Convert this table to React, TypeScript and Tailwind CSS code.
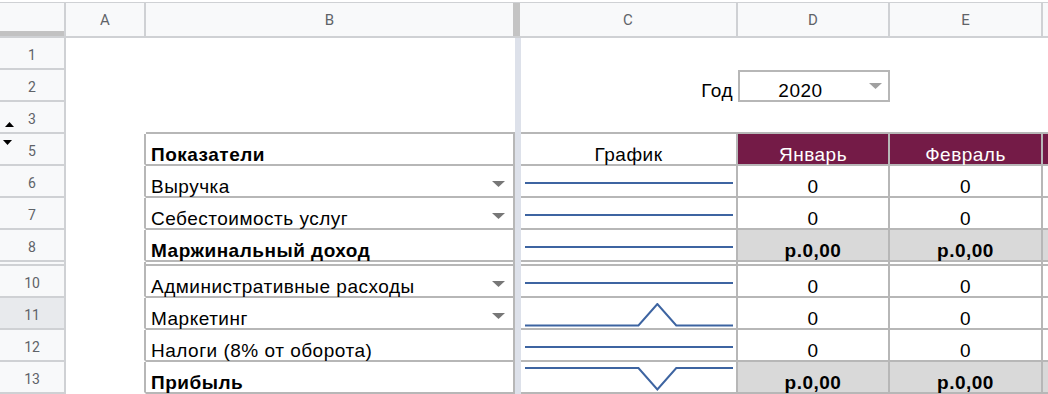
import React from "react";

const FONT = "[font-family:'Liberation_Sans',Arial,sans-serif]";
const HFONT = "[font-family:Roboto,Arial,sans-serif]";

function Tri({ color, w = 13, h = 6 }: { color: string; w?: number; h?: number }) {
  return (
    <svg width={w} height={h} viewBox={`0 0 ${w} ${h}`} className="block">
      <polygon points={`0,0 ${w},0 ${w / 2},${h}`} fill={color} />
    </svg>
  );
}

function Spark({ data }: { data: number[] }) {
  const W = 208;
  const H = 24;
  const min = Math.min(...data);
  const max = Math.max(...data);
  const pts = data
    .map((v, i) => {
      const x = (i * W) / (data.length - 1);
      const y = max === min ? 12 : 1 + (1 - (v - min) / (max - min)) * 21.5;
      return `${x.toFixed(2)},${y.toFixed(2)}`;
    })
    .join(" ");
  return (
    <svg width={W} height={H} className="block">
      <polyline points={pts} fill="none" stroke="#3d64a1" strokeWidth="2" />
    </svg>
  );
}

const flat = [0, 0, 0, 0, 0, 0, 0, 0, 0, 0, 0, 0];
const up = [0, 0, 0, 0, 0, 0, 0, 1, 0, 0, 0, 0];
const down = [0, 0, 0, 0, 0, 0, 0, -1, 0, 0, 0, 0];

function RowHead({ n, bg = "bg-[#f8f9fa]", children }: { n: string; bg?: string; children?: React.ReactNode }) {
  return (
    <div
      className={`relative flex h-full w-[66px] shrink-0 items-center justify-center border-r-2 border-b-2 border-[#cfd1d4] pt-[5px] text-[14px] tracking-normal text-[#5f6368] ${HFONT} ${bg}`}
    >
      {n}
      {children}
    </div>
  );
}

type TableRowProps = {
  n: string;
  headBg?: string;
  marker?: React.ReactNode;
  label: string;
  bold?: boolean;
  dropdown?: boolean;
  spark: number[];
  gray?: boolean;
};

function TableRow({ n, headBg, marker, label, bold, dropdown, spark, gray }: TableRowProps) {
  const valCls = gray ? "bg-[#d9d9d9] font-bold" : "";
  return (
    <div className="flex h-[32px]">
      <RowHead n={n} bg={headBg}>
        {marker}
      </RowHead>
      <div className="h-full w-[80px] shrink-0 border-r-2 border-b-2 border-r-[#b7b7b7] border-b-transparent" />
      <div className="flex h-full w-[369px] shrink-0 items-end border-r-2 border-b-2 border-[#b7b7b7] pl-[5px]">
        <span className={`flex-1 leading-[18px] ${bold ? "font-bold" : ""}`}>{label}</span>
        {dropdown && (
          <span className="mt-[5px] mr-[8px] self-center">
            <Tri color="#777777" />
          </span>
        )}
      </div>
      <div className="h-full w-[6px] shrink-0 bg-[#dde1ea]" />
      <div className="h-full w-[217px] shrink-0 border-r-2 border-b-2 border-[#b7b7b7] pt-[5px] pl-[4px]">
        <Spark data={spark} />
      </div>
      <div className={`flex h-full w-[152px] shrink-0 items-end justify-center border-r-2 border-b-2 border-[#b7b7b7] leading-[18px] ${valCls}`}>
        {gray ? "р.0,00" : "0"}
      </div>
      <div className={`flex h-full w-[153px] shrink-0 items-end justify-center border-r-2 border-b-2 border-[#b7b7b7] leading-[18px] ${valCls}`}>
        {gray ? "р.0,00" : "0"}
      </div>
      <div className={`h-full flex-1 border-b-2 border-[#b7b7b7] ${gray ? "bg-[#d9d9d9]" : ""}`} />
    </div>
  );
}

function BlankRow({ n, tableTop, marker, children }: { n: string; tableTop?: boolean; marker?: React.ReactNode; children?: React.ReactNode }) {
  const bb = tableTop ? "border-b-[#b7b7b7]" : "border-b-transparent";
  return (
    <div className="flex h-[32px]">
      <RowHead n={n}>{marker}</RowHead>
      <div className="h-full w-[80px] shrink-0 border-b-2 border-b-transparent" />
      <div className={`h-full w-[369px] shrink-0 border-b-2 ${bb}`} />
      <div className="h-full w-[6px] shrink-0 bg-[#dde1ea]" />
      {children ?? (
        <>
          <div className={`h-full w-[217px] shrink-0 border-b-2 ${bb}`} />
          <div className={`h-full w-[152px] shrink-0 border-b-2 ${bb}`} />
        </>
      )}
      <div className={`h-full w-[153px] shrink-0 border-b-2 ${bb}`} />
      <div className={`h-full flex-1 border-b-2 ${bb}`} />
    </div>
  );
}

export default function App() {
  return (
    <div className={`h-[394px] w-[1048px] overflow-hidden bg-white text-[19px] tracking-[0.5px] text-black ${FONT}`}>
      {/* column header */}
      <div className="bg-white pt-[2px]">
        <div className={`flex h-[36px] border-t border-b-2 border-[#cfd1d4] bg-[#f8f9fa] text-[15px] tracking-normal text-[#5f6368] ${HFONT}`}>
          <div className="flex h-full w-[66px] shrink-0 flex-col justify-end border-r-2 border-[#cfd1d4]">
            <div className="h-[5px] bg-[#c2c2c2]" />
          </div>
          <div className="flex h-full w-[80px] shrink-0 items-center justify-center border-r-2 border-[#cfd1d4] pt-[2px]">A</div>
          <div className="flex h-full w-[367px] shrink-0 items-center justify-center pt-[2px]">B</div>
          <div className="h-full w-[7px] shrink-0 bg-[#c4c4c4]" />
          <div className="flex h-full w-[218px] shrink-0 items-center justify-center border-r-2 border-[#cfd1d4] pt-[2px]">C</div>
          <div className="flex h-full w-[152px] shrink-0 items-center justify-center border-r-2 border-[#cfd1d4] pt-[2px]">D</div>
          <div className="flex h-full w-[153px] shrink-0 items-center justify-center border-r-2 border-[#cfd1d4] pt-[2px]">E</div>
          <div className="h-full flex-1" />
        </div>
      </div>

      <BlankRow n="1" />
      <BlankRow n="2">
        <div className="flex h-full w-[217px] shrink-0 items-end justify-end border-b-2 border-b-transparent pr-[5px] leading-[18px]">
          Год
        </div>
        <div className="flex h-full w-[152px] shrink-0 border-2 border-[#b7b7b7]">
          <span className="flex flex-1 items-end justify-center pr-[8px] leading-[18px]">2020</span>
          <span className="mr-[6px] self-center">
            <Tri color="#a0a0a0" />
          </span>
        </div>
      </BlankRow>
      <BlankRow
        n="3"
        tableTop
        marker={
          <span className="absolute left-[5px] top-[20px]">
            <svg width="9" height="5" viewBox="0 0 9 5" className="block">
              <polygon points="0,5 9,5 4.5,0" fill="#000" />
            </svg>
          </span>
        }
      />

      {/* row 5: table header */}
      <div className="flex h-[32px]">
        <RowHead n="5">
          <span className="absolute left-[3px] top-[6px]">
            <svg width="9" height="5" viewBox="0 0 9 5" className="block">
              <polygon points="0,0 9,0 4.5,5" fill="#000" />
            </svg>
          </span>
        </RowHead>
        <div className="h-full w-[80px] shrink-0 border-r-2 border-b-2 border-r-[#b7b7b7] border-b-transparent" />
        <div className="flex h-full w-[369px] shrink-0 items-end border-r-2 border-b-2 border-[#b7b7b7] pl-[5px]">
          <span className="leading-[18px] font-bold">Показатели</span>
        </div>
        <div className="h-full w-[6px] shrink-0 bg-[#dde1ea]" />
        <div className="flex h-full w-[217px] shrink-0 items-end justify-center border-r-2 border-b-2 border-[#b7b7b7] leading-[18px]">
          График
        </div>
        <div className="flex h-full w-[152px] shrink-0 items-end justify-center border-r-2 border-b-2 border-[#b7b7b7] bg-[#741b47] leading-[18px] text-white">
          Январь
        </div>
        <div className="flex h-full w-[153px] shrink-0 items-end justify-center border-r-2 border-b-2 border-[#b7b7b7] bg-[#741b47] leading-[18px] text-white">
          Февраль
        </div>
        <div className="h-full flex-1 border-b-2 border-[#b7b7b7] bg-[#741b47]" />
      </div>

      <TableRow n="6" label="Выручка" dropdown spark={flat} />
      <TableRow n="7" label="Себестоимость услуг" dropdown spark={flat} />
      <TableRow n="8" label="Маржинальный доход" bold spark={flat} gray />

      {/* hidden row 9 indicator */}
      <div className="flex h-[4px]">
        <div className="h-full w-[66px] shrink-0 border-r-2 border-b-2 border-[#cfd1d4] bg-[#f8f9fa]" />
        <div className="h-full w-[80px] shrink-0 border-r-2 border-[#b7b7b7]" />
        <div className="h-full w-[369px] shrink-0 border-r-2 border-b-2 border-[#b7b7b7]" />
        <div className="h-full w-[6px] shrink-0 bg-[#dde1ea]" />
        <div className="h-full w-[217px] shrink-0 border-r-2 border-b-2 border-[#b7b7b7]" />
        <div className="h-full w-[152px] shrink-0 border-r-2 border-b-2 border-[#b7b7b7]" />
        <div className="h-full w-[153px] shrink-0 border-r-2 border-b-2 border-[#b7b7b7]" />
        <div className="h-full flex-1 border-b-2 border-[#b7b7b7]" />
      </div>

      <TableRow n="10" label="Административные расходы" dropdown spark={flat} />
      <TableRow n="11" headBg="bg-[#e8eaed]" label="Маркетинг" dropdown spark={up} />
      <TableRow n="12" label="Налоги (8% от оборота)" spark={flat} />
      <TableRow n="13" label="Прибыль" bold spark={down} gray />
    </div>
  );
}
